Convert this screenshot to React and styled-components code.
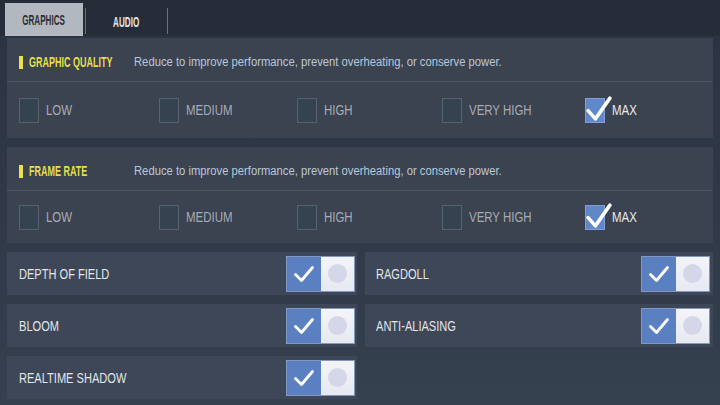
import React from "react";
import styled, { createGlobalStyle } from "styled-components";

const GlobalStyle = createGlobalStyle`
    html, body {
        margin: 0;
        padding: 0;
        width: 720px;
        height: 405px;
        overflow: hidden;
        background: #2e3745;
        font-family: "Liberation Sans", Arial, sans-serif;
    }
`;

// the game font is a narrow one, so labels are squeezed horizontally
const Narrow = styled.span`
    display: inline-block;
    white-space: nowrap;
    transform: scaleX(${({ scale }) => scale});
    transform-origin: ${({ center }) => (center ? "center" : "left")} center;
`;

const Page = styled.div`
    width: 720px;
    height: 405px;
    background: linear-gradient(180deg, #2b3341 0%, #303a49 60%, #35414f 100%);
`;

const TopBar = styled.div`
    display: flex;
    align-items: flex-end;
    height: 36px;
    padding-left: 5px;
    background: #272d38;
    box-sizing: border-box;
`;

const Tab = styled.div`
    display: flex;
    align-items: center;
    justify-content: center;
    width: ${({ width }) => width}px;
    height: ${({ active }) => (active ? 33 : 26)}px;
    margin-bottom: ${({ active }) => (active ? 0 : 2)}px;
    margin-right: ${({ active }) => (active ? 2 : 0)}px;
    background: ${({ active }) => (active ? "#b3b7bf" : "transparent")};
    color: ${({ active }) => (active ? "#2a2f39" : "#e4e7eb")};
    border-right: ${({ active }) => (active ? "none" : "1px solid #6a717c")};
    box-sizing: border-box;
    font-size: 15px;
    font-weight: bold;
`;

const Divider = styled.div`
    width: 1px;
    height: 26px;
    margin-bottom: 2px;
    background: #6a717c;
`;

const Content = styled.div`
    display: flex;
    flex-direction: column;
    gap: 9px;
    padding: 2px 7px 0 7px;
`;

const Panel = styled.div`
    background: #3b4250;
    display: flex;
    flex-direction: column;
`;

const PanelHeader = styled.div`
    display: flex;
    align-items: center;
    height: 44px;
    padding: 5px 0 0 12px;
    box-sizing: border-box;
    border-bottom: 1px solid #4d5462;
    margin-right: 1px;
`;

const Marker = styled.div`
    width: 4px;
    height: 13px;
    background: #e9e24a;
    margin-right: 6px;
`;

const Title = styled.div`
    width: 105px;
    color: #e6df4a;
    font-size: 15.5px;
    font-weight: bold;
`;

const Description = styled.div`
    color: #b9c8d9;
    font-size: 12.5px;
`;

const Options = styled.div`
    display: grid;
    grid-template-columns: 140px 138px 145px 143px 100px;
    align-items: center;
    height: ${({ height }) => height}px;
    padding-left: 12px;
`;

const Option = styled.div`
    display: flex;
    align-items: center;
    gap: 7px;
    color: ${({ checked }) => (checked ? "#e8eaee" : "#a6acb5")};
    font-size: 14.5px;
`;

const Box = styled.div`
    position: relative;
    width: 20px;
    height: 25px;
    box-sizing: border-box;
    background: ${({ checked }) => (checked ? "#6087c7" : "#34434f")};
    border: 1px solid ${({ checked }) => (checked ? "#7f9fd6" : "#58626d")};

    svg {
        position: absolute;
        left: -1px;
        top: -4px;
    }
`;

const ToggleGrid = styled.div`
    display: grid;
    grid-template-columns: 350px 348px;
    grid-auto-rows: 43px;
    column-gap: 8px;
    row-gap: 9px;
`;

const ToggleRow = styled.div`
    display: flex;
    align-items: center;
    justify-content: space-between;
    background: #3d4757;
    padding: 0 ${({ right }) => (right ? 3 : 2)}px 0 ${({ right }) => (right ? 11 : 12)}px;
    color: #e2e6eb;
    font-size: 14px;
`;

const Toggle = styled.div`
    display: flex;
    width: 69px;
    height: 36px;
    box-sizing: border-box;
    border: 1px solid #8398bf;
    background: #5b80c1;
`;

const ToggleOn = styled.div`
    flex: 1;
    display: flex;
    align-items: center;
    justify-content: center;
`;

const Knob = styled.div`
    width: 33px;
    display: flex;
    align-items: center;
    justify-content: center;
    background: linear-gradient(180deg, #f4f5f9, #e6e9f1);

    &::after {
        content: "";
        width: 19px;
        height: 19px;
        border-radius: 50%;
        background: #d3d7e8;
    }
`;

const Check = () => (
    <svg width="27" height="27" viewBox="0 0 26 26">
        <path d="M3 15 L10 23 L24 3" fill="none" stroke="#fff" strokeWidth="3.4" strokeLinecap="round" strokeLinejoin="round" />
    </svg>
);

const SmallCheck = () => (
    <svg width="22" height="22" viewBox="0 0 22 22">
        <path d="M2.5 11.5 L8.5 17.5 L19.5 4.5" fill="none" stroke="#fff" strokeWidth="2.8" strokeLinecap="round" strokeLinejoin="round" />
    </svg>
);

const levels = ["LOW", "MEDIUM", "HIGH", "VERY HIGH", "MAX"];

const QualityPanel = ({ title, height }) => (
    <Panel>
        <PanelHeader>
            <Marker />
            <Title><Narrow scale={0.58}>{title}</Narrow></Title>
            <Description>
                <Narrow scale={0.9}>Reduce to improve performance, prevent overheating, or conserve power.</Narrow>
            </Description>
        </PanelHeader>
        <Options height={height}>
            {levels.map((l) => {
                const checked = l === "MAX";
                return (
                    <Option key={l} checked={checked}>
                        <Box checked={checked}>{checked && <Check />}</Box>
                        <Narrow scale={0.79}>{l}</Narrow>
                    </Option>
                );
            })}
        </Options>
    </Panel>
);

const toggles = ["DEPTH OF FIELD", "RAGDOLL", "BLOOM", "ANTI-ALIASING", "REALTIME SHADOW"];

export default function App() {
    return (
        <Page>
            <GlobalStyle />
            <TopBar>
                <Tab active width={78}><Narrow scale={0.54} center>GRAPHICS</Narrow></Tab>
                <Divider />
                <Tab width={82}><Narrow scale={0.54} center>AUDIO</Narrow></Tab>
            </TopBar>
            <Content>
                <QualityPanel title="GRAPHIC QUALITY" height={56} />
                <QualityPanel title="FRAME RATE" height={52} />
                <ToggleGrid>
                    {toggles.map((t, i) => (
                        <ToggleRow key={t} right={i % 2 === 1}>
                            <Narrow scale={0.79}>{t}</Narrow>
                            <Toggle>
                                <ToggleOn><SmallCheck /></ToggleOn>
                                <Knob />
                            </Toggle>
                        </ToggleRow>
                    ))}
                </ToggleGrid>
            </Content>
        </Page>
    );
}
